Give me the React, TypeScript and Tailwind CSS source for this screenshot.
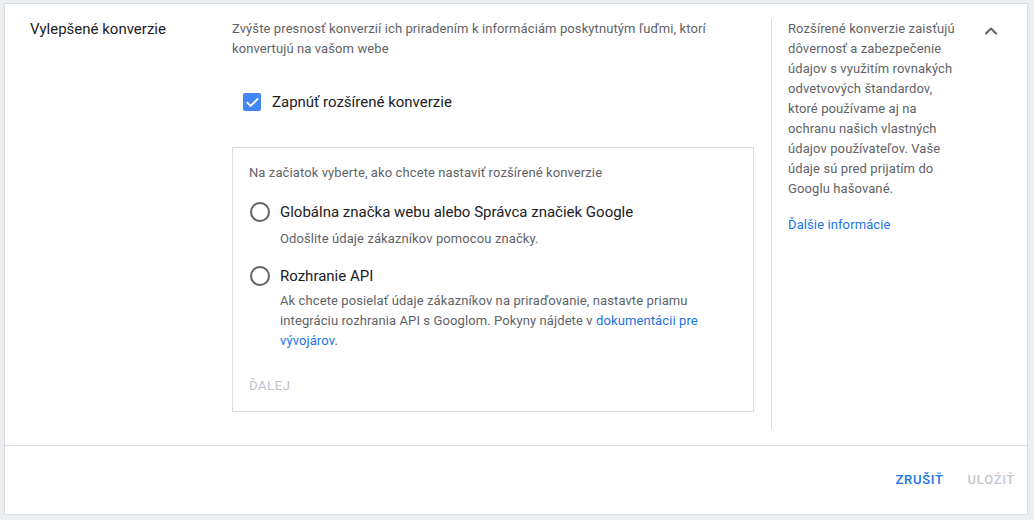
import { ChevronUp } from "lucide-react";

function Checkbox() {
  return (
    <div className="w-[18px] h-[18px] rounded-[2px] bg-[#4285f4] flex items-center justify-center">
      <svg width="15" height="15" viewBox="0 0 24 24">
        <path
          d="M4 12.5l5 5L20 6.5"
          fill="none"
          stroke="#fff"
          strokeWidth="3"
          strokeLinecap="square"
        />
      </svg>
    </div>
  );
}

function Radio({ label }: { label: string }) {
  return (
    <div className="flex items-center h-[24px] pl-[1px]">
      <div className="w-[20px] h-[20px] rounded-full border-2 border-[#5f6368]" />
      <span className="ml-[10px] text-[15px] leading-[20px] text-[#202124]">
        {label}
      </span>
    </div>
  );
}

export default function App() {
  return (
    <div
      className="min-h-[520px] bg-[#eceff1] pl-[4px] pt-[3px]"
      style={{ fontFamily: "Roboto, 'Liberation Sans', sans-serif" }}
    >
      <div className="w-[1024px] h-[512px] bg-white border border-[#dadce0] flex flex-col">
        <div className="flex flex-1 pt-[15px] pb-[16px]">
          <div className="w-[227px] pl-[25px] text-[15px] leading-[20px] text-[#202124]">
            Vylepšené konverzie
          </div>

          <div className="w-[522px]">
            <p className="text-[13px] leading-[20px] text-[#5f6368] pr-[40px] tracking-[0.1px]">
              Zvýšte presnosť konverzií ich priradením k informáciám poskytnutým
              ľuďmi, ktorí konvertujú na vašom webe
            </p>

            <div className="mt-[31px] h-[24px] flex items-center pl-[11px]">
              <Checkbox />
              <span className="ml-[11px] text-[15px] leading-[20px] text-[#202124]">
                Zapnúť rozšírené konverzie
              </span>
            </div>

            <div className="mt-[33px] border border-[#dadce0] pl-[16px] pt-[15px] pb-[15px]">
              <p className="text-[13px] leading-[20px] text-[#5f6368] tracking-[0.1px]">
                Na začiatok vyberte, ako chcete nastaviť rozšírené konverzie
              </p>

              <div className="mt-[17px]">
                <Radio label="Globálna značka webu alebo Správca značiek Google" />
              </div>
              <p className="mt-[5px] pl-[31px] text-[13px] leading-[20px] text-[#5f6368] tracking-[0.1px]">
                Odošlite údaje zákazníkov pomocou značky.
              </p>

              <div className="mt-[15px]">
                <Radio label="Rozhranie API" />
              </div>
              <p className="mt-[3px] ml-[31px] w-[420px] text-[13px] leading-[20px] text-[#5f6368] tracking-[0.1px]">
                Ak chcete posielať údaje zákazníkov na priraďovanie, nastavte priamu
                integráciu rozhrania API s Googlom. Pokyny nájdete v{" "}
                <span className="text-[#1a73e8]">dokumentácii pre vývojárov</span>.
              </p>

              <div className="mt-[25px] text-[13px] leading-[20px] tracking-[0.6px] text-[#bdc1c6]">
                ĎALEJ
              </div>
            </div>
          </div>

          <div className="w-[17px]" />
          <div className="w-px bg-[#dadce0] self-stretch" />

          <div className="w-[174px] ml-[16px] text-[13px] leading-[20px] text-[#5f6368] tracking-[0.1px]">
            <p>
              Rozšírené konverzie zaisťujú dôvernosť a zabezpečenie údajov s
              využitím rovnakých odvetvových štandardov, ktoré používame aj na
              ochranu našich vlastných údajov používateľov. Vaše údaje sú pred
              prijatím do Googlu hašované.
            </p>
            <a className="block mt-[16px] text-[#1a73e8]">Ďalšie informácie</a>
          </div>

          <div className="ml-auto mr-[24px] w-[24px] h-[24px] flex items-center justify-center">
            <ChevronUp className="w-[20px] h-[20px] text-[#5f6368]" strokeWidth={2.5} />
          </div>
        </div>

        <div className="h-[69px] border-t border-[#dadce0] flex items-center justify-end gap-[24px] pr-[12px]">
          <button className="text-[13px] font-medium tracking-[0.7px] text-[#1a73e8]">
            ZRUŠIŤ
          </button>
          <button className="text-[13px] font-medium tracking-[0.7px] text-[#c4c7cb]">
            ULOŽIŤ
          </button>
        </div>
      </div>
    </div>
  );
}
